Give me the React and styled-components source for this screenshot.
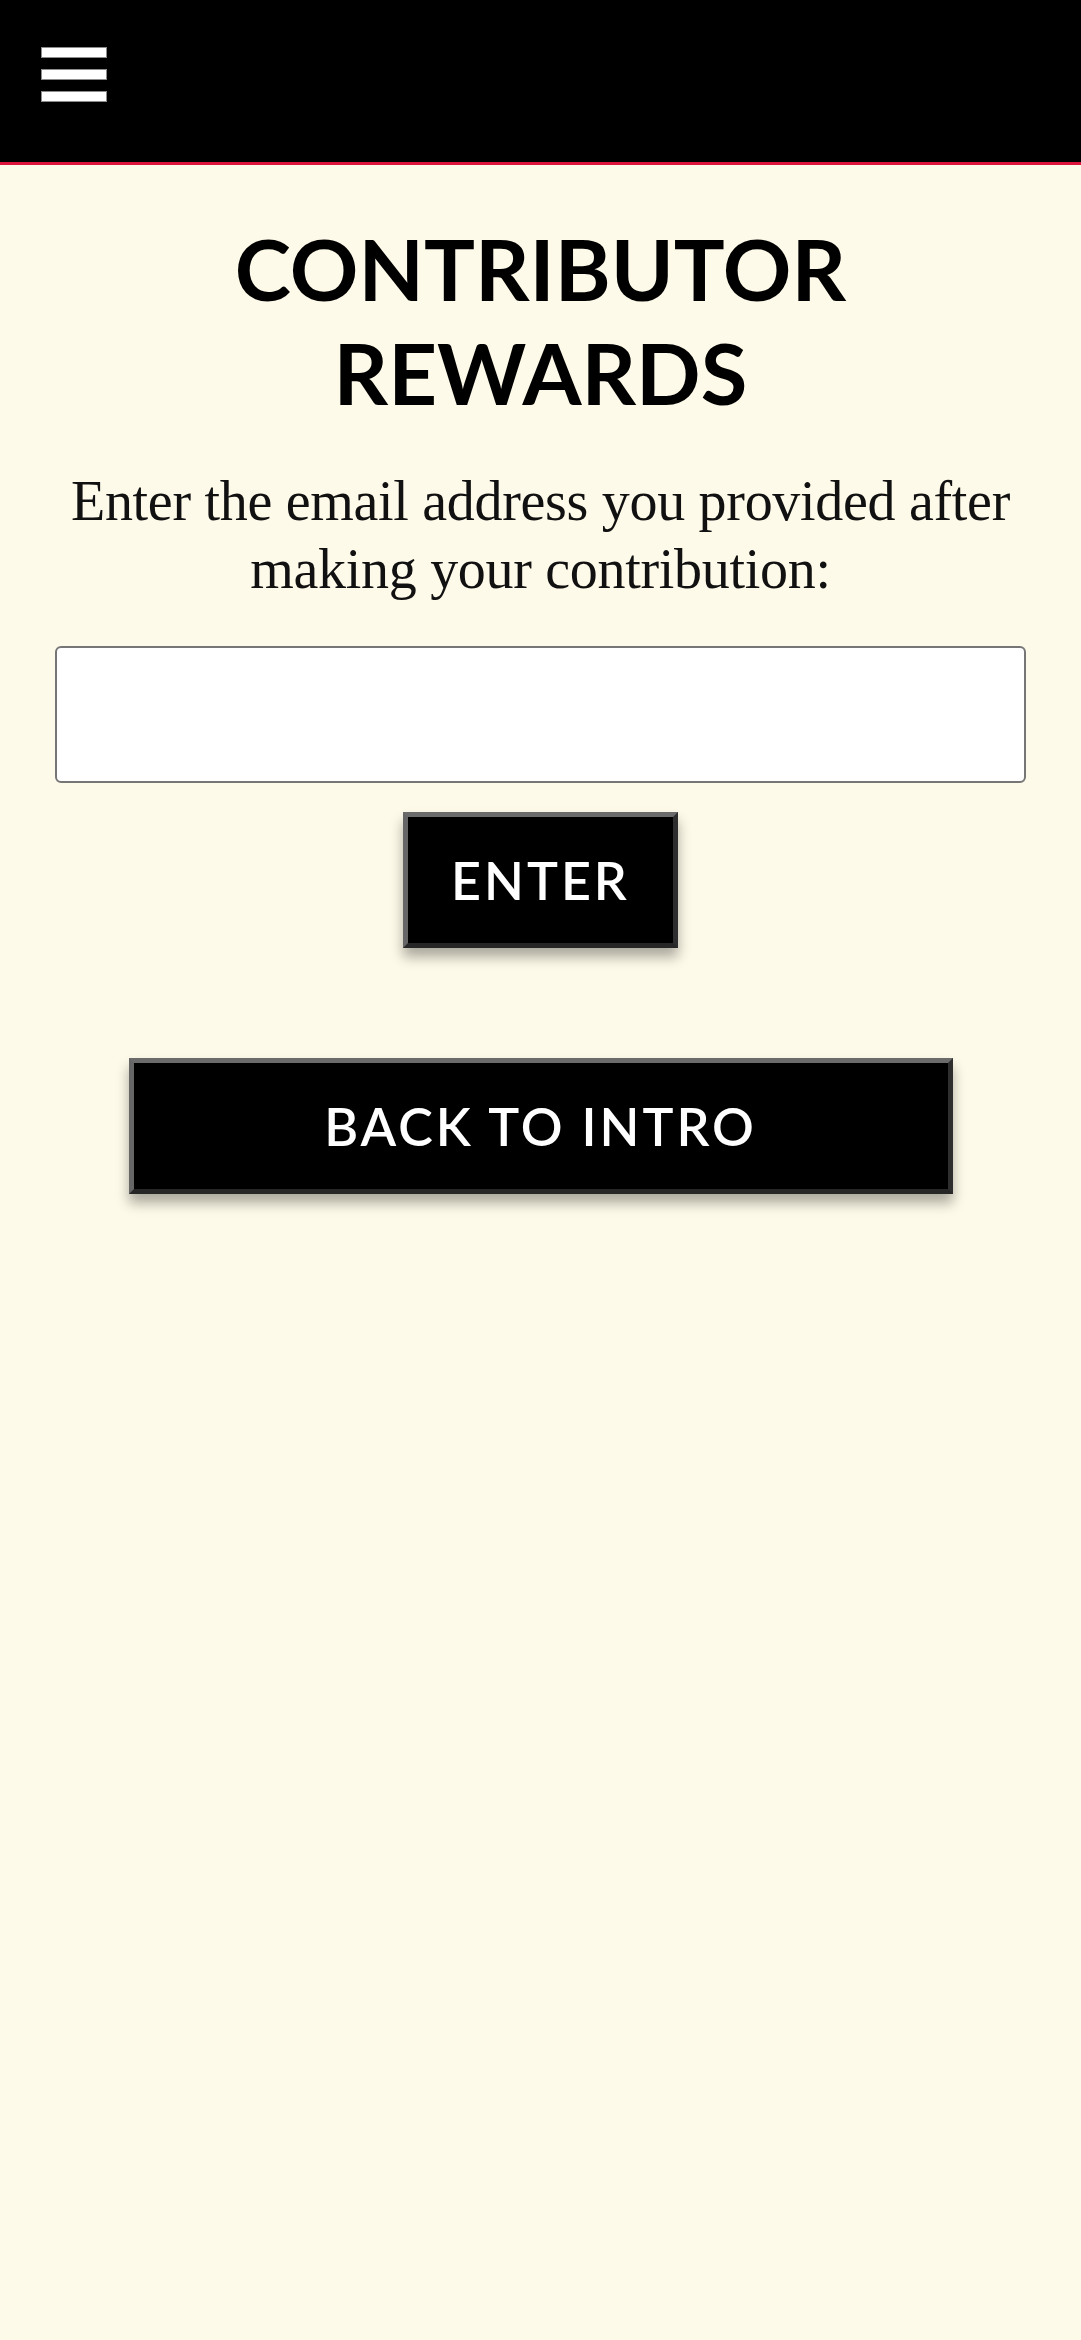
import React from "react";
import styled, { createGlobalStyle } from "styled-components";

const GlobalStyle = createGlobalStyle`
  html, body {
    margin: 0;
    padding: 0;
    background: #fefae9;
  }
  * { box-sizing: border-box; }
`;

const Page = styled.div`
  min-height: 2340px;
  background: #fefae9;
`;

const Header = styled.header`
  height: 165px;
  background: #000;
  border-bottom: 3px solid #dc143c;
  padding: 47px 0 0 41px;
`;

const MenuButton = styled.button`
  display: flex;
  flex-direction: column;
  gap: 11px;
  width: 66px;
  padding: 0;
  margin: 0;
  background: none;
  border: none;
  cursor: pointer;
`;

const Bar = styled.span`
  display: block;
  width: 66px;
  height: 11px;
  background: #fff;
  border: 1px solid #8c8c8c;
`;

const Main = styled.main`
  display: flex;
  flex-direction: column;
  align-items: center;
  padding: 51px 55px 0;
`;

const Title = styled.h1`
  margin: 0;
  font-family: Lato, "Liberation Sans", sans-serif;
  font-weight: 700;
  font-size: 85px;
  line-height: 104px;
  text-align: center;
  color: #000;
`;

const Intro = styled.p`
  margin: 43px 0 0;
  font-family: "Liberation Serif", "DejaVu Serif", serif;
  font-size: 56px;
  line-height: 68px;
  letter-spacing: -0.3px;
  text-align: center;
  color: #111;
`;

const EmailInput = styled.input`
  margin-top: 43px;
  width: 100%;
  height: 137px;
  border: 2px solid #767676;
  border-radius: 6px;
  background: #fff;
  font-size: 40px;
  padding: 0 20px;
  outline: none;
`;

const ActionButton = styled.button`
  margin-top: ${(p) => (p.$wide ? "110px" : "29px")};
  width: ${(p) => (p.$wide ? "824px" : "275px")};
  height: 136px;
  background: #000;
  color: #fff;
  border-style: solid;
  border-width: 5px;
  border-color: #6b6b6b #2e2e2e #262626 #666666;
  box-shadow: 0 9px 12px rgba(0, 0, 0, 0.33);
  font-family: Lato, "Liberation Sans", sans-serif;
  font-weight: 600;
  font-size: 52px;
  letter-spacing: 3px;
  cursor: pointer;
  padding: 0;
`;

export default function App() {
  return (
    <Page>
      <GlobalStyle />
      <Header>
        <MenuButton aria-label="Menu">
          <Bar />
          <Bar />
          <Bar />
        </MenuButton>
      </Header>
      <Main>
        <Title>
          CONTRIBUTOR
          <br />
          REWARDS
        </Title>
        <Intro>
          Enter the email address you provided after making your contribution:
        </Intro>
        <EmailInput type="email" />
        <ActionButton>ENTER</ActionButton>
        <ActionButton $wide>BACK TO INTRO</ActionButton>
      </Main>
    </Page>
  );
}
